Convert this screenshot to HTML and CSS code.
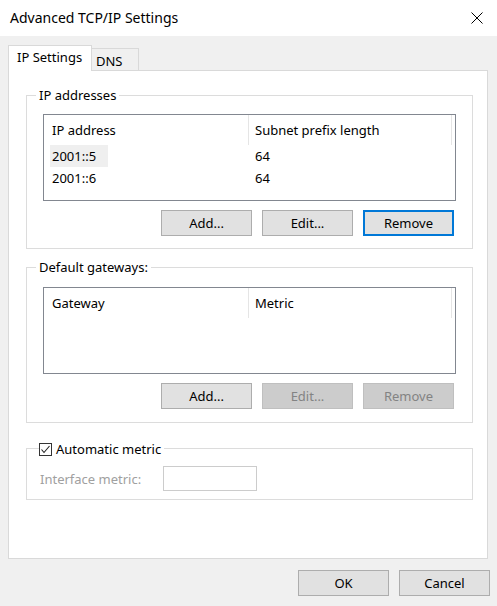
FILE: index.html
```html
<!DOCTYPE html>
<html>
<head>
<meta charset="utf-8">
<title>Advanced TCP/IP Settings</title>
<link rel="stylesheet" href="styles.css">
</head>
<body>
<div class="window">
  <div class="titlebar">
    <span class="title">Advanced TCP/IP Settings</span>
    <svg class="close" width="12" height="12" viewBox="0 0 12 12"><path d="M0.5 0.5 L11.5 11.5 M11.5 0.5 L0.5 11.5" stroke="#000" stroke-width="1" fill="none"/></svg>
  </div>
  <div class="body">
    <div class="tabs">
      <div class="tab active">IP Settings</div>
      <div class="tab">DNS</div>
    </div>
    <div class="panel">
      <div class="group group-ip">
        <div class="group-title">IP addresses</div>
        <div class="listview">
          <div class="lv-header">
            <div class="lv-c1">IP address</div>
            <div class="lv-c2">Subnet prefix length</div>
          </div>
          <div class="lv-row">
            <div class="lv-c1 cell"><span class="sel">2001::5</span></div>
            <div class="lv-c2 cell">64</div>
          </div>
          <div class="lv-row">
            <div class="lv-c1 cell"><span class="nosel">2001::6</span></div>
            <div class="lv-c2 cell">64</div>
          </div>
        </div>
        <div class="btnrow">
          <button class="btn">Add...</button>
          <button class="btn">Edit...</button>
          <button class="btn focus">Remove</button>
        </div>
      </div>

      <div class="group group-gw">
        <div class="group-title">Default gateways:</div>
        <div class="listview">
          <div class="lv-header">
            <div class="lv-c1">Gateway</div>
            <div class="lv-c2">Metric</div>
          </div>
        </div>
        <div class="btnrow">
          <button class="btn">Add...</button>
          <button class="btn disabled">Edit...</button>
          <button class="btn disabled">Remove</button>
        </div>
      </div>

      <div class="group group-metric">
        <div class="group-title check-title">
          <svg class="checkbox" width="13" height="13" viewBox="0 0 13 13"><rect x="0.5" y="0.5" width="12" height="12" fill="#fff" stroke="#333"/><path d="M2.5 6.5 L5 9.5 L10.5 3" stroke="#222" stroke-width="1.1" fill="none"/></svg>
          <span>Automatic metric</span>
        </div>
        <div class="metric-row">
          <span class="dim">Interface metric:</span>
          <div class="textbox"></div>
        </div>
      </div>
    </div>
    <div class="footer">
      <button class="btn">OK</button>
      <button class="btn">Cancel</button>
    </div>
  </div>
</div>
</body>
</html>
```

FILE: styles.css
```css
html, body {
  margin: 0;
  padding: 0;
}
body {
  width: 497px;
  height: 606px;
  background: #f0f0f0;
  font-family: "Noto Sans", "Open Sans", sans-serif;
  font-size: 13px;
  color: #000;
  overflow: hidden;
}
.window {
  width: 497px;
  height: 606px;
  display: flex;
  flex-direction: column;
}
.titlebar {
  height: 36px;
  background: #fff;
  display: flex;
  align-items: center;
  justify-content: space-between;
  padding: 0 14px 0 10px;
  box-sizing: border-box;
}
.title {
  font-size: 14px;
  line-height: 20px;
  margin-top: -1px;
}
.close {
  display: block;
  margin-top: -1px;
}
.body {
  padding: 9px 9px 0 8px;
}
.tabs {
  display: flex;
  align-items: flex-end;
  height: 25px;
}
.tab {
  box-sizing: border-box;
  border: 1px solid #d9d9d9;
  border-bottom: none;
  background: #f0f0f0;
  height: 22px;
  padding: 2px 5px 0 4px;
  line-height: 18px;
}
.tab.active {
  background: #fff;
  height: 26px;
  width: 84px;
  padding: 2px 0 0 8px;
  margin-bottom: -1px;
  position: relative;
  z-index: 1;
}
.tab + .tab {
  border-left: none;
  width: 47px;
  padding-top: 3px;
}
.panel {
  box-sizing: border-box;
  width: 480px;
  height: 489px;
  background: #fff;
  border: 1px solid #d9d9d9;
  padding-top: 24px;
}
.group {
  border: 1px solid #dcdcdc;
  margin: 0 14px 0 17px;
  padding: 0 16px 12px 16px;
}
.group-gw {
  margin-top: 18px;
  padding-bottom: 13px;
}
.group-metric {
  margin-top: 25px;
  padding: 0 16px 8px 13px;
}
.group-title {
  width: fit-content;
  background: #fff;
  margin: -9px 0 0 -7px;
  padding: 0 3px;
  line-height: 16px;
  height: 16px;
}
.check-title {
  display: flex;
  align-items: center;
  gap: 4px;
  margin: -8px 0 0 -1px;
  padding: 0 3px 0 0;
}
.checkbox {
  display: block;
}
.listview {
  box-sizing: border-box;
  height: 87px;
  margin-top: 11px;
  border: 1px solid #828790;
  background: #fff;
}
.group-gw .listview {
  margin-top: 12px;
}
.lv-header {
  display: flex;
  height: 30px;
}
.lv-header .lv-c1,
.lv-header .lv-c2 {
  display: flex;
  align-items: center;
  border-right: 1px solid #e5e5e5;
  box-sizing: border-box;
}
.lv-c1 {
  width: 205px;
  padding-left: 8px;
  box-sizing: border-box;
}
.lv-c2 {
  width: 203px;
  padding-left: 6px;
  box-sizing: border-box;
}
.lv-row {
  display: flex;
  height: 22px;
  line-height: 22px;
}
.lv-row .lv-c1 {
  padding-left: 6px;
}
.sel, .nosel {
  display: inline-block;
  padding: 0 2px;
  height: 22px;
  line-height: 22px;
  vertical-align: top;
}
.sel {
  background: #efefef;
  width: 54px;
}
.btnrow {
  display: flex;
  justify-content: flex-end;
  gap: 10px;
  margin-top: 9px;
  padding-right: 2px;
}
.btn {
  box-sizing: border-box;
  width: 91px;
  height: 26px;
  background: #e1e1e1;
  border: 1px solid #adadad;
  font-family: inherit;
  font-size: 13px;
  color: #000;
  padding: 0;
  margin: 0;
  line-height: 22px;
}
.btn.focus {
  border: 2px solid #0078d7;
}
.btn.disabled {
  background: #cccccc;
  border-color: #bfbfbf;
  color: #838383;
}
.metric-row {
  display: flex;
  align-items: center;
  margin-top: 9px;
}
.dim {
  color: #a0a0a0;
  width: 123px;
}
.textbox {
  box-sizing: border-box;
  width: 94px;
  height: 25px;
  border: 1px solid #cccccc;
  background: #fff;
}
.footer {
  display: flex;
  justify-content: flex-end;
  gap: 10px;
  margin-top: 11px;
  margin-right: -2px;
}
```
